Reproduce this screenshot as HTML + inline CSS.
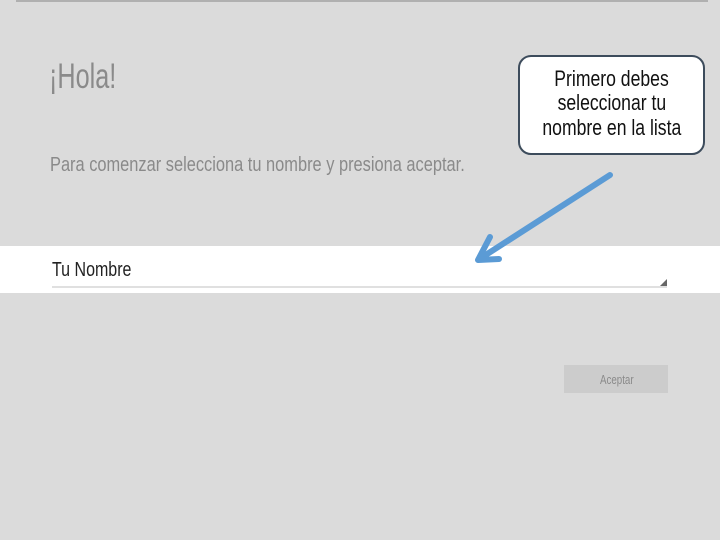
<!DOCTYPE html>
<html><head><meta charset="utf-8"><style>
body{margin:0;width:720px;height:540px;background:#dbdbdb;position:relative;overflow:hidden;font-family:"Liberation Sans",sans-serif;}
.s{transform-origin:0 0;white-space:nowrap;}
.top{position:absolute;left:16px;top:0;width:692px;height:2px;background:#b0b0b0;}
.hola{position:absolute;left:49px;top:57px;font-size:35px;color:#8a8a8a;transform:scaleX(0.72);}
.sub{position:absolute;left:50px;top:154px;font-size:20px;color:#8a8a8a;transform:scaleX(0.82);}
.band{position:absolute;left:0;top:246px;width:720px;height:47px;background:#fff;}
.name{position:absolute;left:52px;top:259px;font-size:20px;color:#222;transform:scaleX(0.8);}
.line{position:absolute;left:52px;top:286px;width:615px;height:2px;background:#e0e0e0;}
.tri{position:absolute;left:660px;top:279px;width:0;height:0;border-left:7px solid transparent;border-bottom:7px solid #666;}
.btn{position:absolute;left:564px;top:365px;width:104px;height:28px;background:#cccccc;}
.btn span{position:absolute;left:36px;top:7px;font-size:13px;color:#8a8a8a;transform:scaleX(0.75);}
.call{position:absolute;left:518px;top:55px;border:2px solid #3d4c5c;border-radius:13px;background:#fff;box-sizing:border-box;width:187px;height:100px;}
.call div{position:absolute;left:0;width:183px;text-align:center;font-size:22px;color:#111;}
.call div span{display:inline-block;transform:scaleX(0.8);}
</style></head><body>
<div class="top"></div>
<div class="hola s">¡Hola!</div>
<div class="sub s">Para comenzar selecciona tu nombre y presiona aceptar.</div>
<div class="band"></div>
<div class="name s">Tu Nombre</div>
<div class="line"></div>
<div class="tri"></div>
<div class="btn"><span class="s">Aceptar</span></div>
<div class="call">
<div style="top:9px"><span>Primero debes</span></div>
<div style="top:33px"><span>seleccionar tu</span></div>
<div style="top:58px"><span>nombre en la lista</span></div>
</div>
<svg width="720" height="540" style="position:absolute;left:0;top:0">
<g stroke="#5b9bd5" stroke-width="6" fill="none" stroke-linecap="round" stroke-linejoin="round">
<line x1="610" y1="175" x2="481" y2="258"/>
<polyline points="490,237 478,260 499,259"/>
</g>
</svg>
</body></html>
